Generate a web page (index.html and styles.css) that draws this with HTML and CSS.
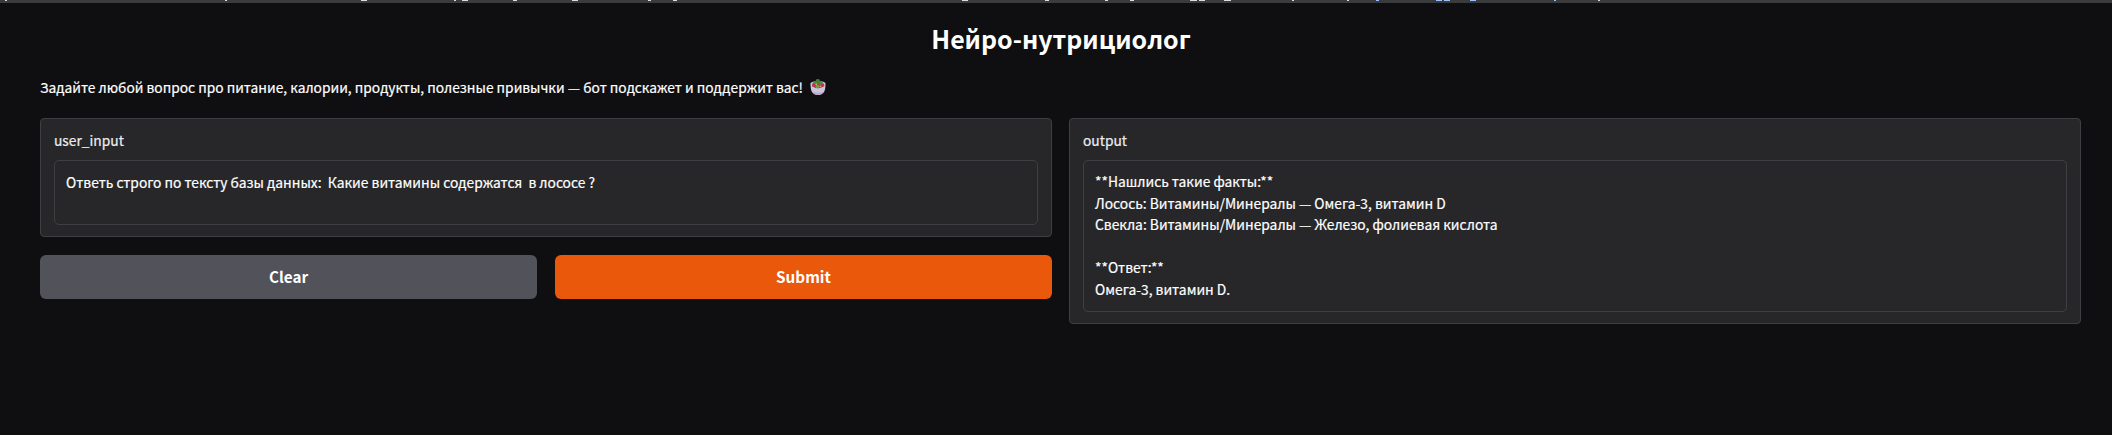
FILE: index.html
```html
<!DOCTYPE html>
<html lang="ru">
<head>
<meta charset="utf-8">
<title>Нейро-нутрициолог</title>
<link rel="stylesheet" href="styles.css">
</head>
<body>
<div class="strip">
<svg class="strip-marks" width="2112" height="1" viewBox="0 0 2112 1" shape-rendering="crispEdges" aria-hidden="true">
<path fill="#dcdcdc" d="M5 0h2v1h-2zM225 0h2v1h-2zM361 0h6v1h-6zM454 0h2v1h-2zM462 0h6v1h-6zM513 0h4v1h-4zM572 0h6v1h-6zM648 0h3v1h-3zM673 0h4v1h-4zM962 0h6v1h-6zM1045 0h4v1h-4zM1105 0h3v1h-3zM1130 0h4v1h-4zM1190 0h7v1h-7zM1199 0h6v1h-6zM1224 0h7v1h-7zM1292 0h2v1h-2zM1347 0h2v1h-2zM1598 0h2v1h-2z"/>
<path fill="#99c3ff" d="M1376 0h3v1h-3zM1436 0h6v1h-6zM1444 0h6v1h-6zM1470 0h6v1h-6zM1554 0h2v1h-2z"/>
</svg>
</div>
<main class="app">
<h1 class="title">Нейро-нутрициолог</h1>
<p class="intro"><span>Задайте любой вопрос про питание, калории, продукты, полезные привычки — бот подскажет и поддержит вас!</span>
<svg class="salad" width="16" height="16" viewBox="0 0 15 16" aria-hidden="true">
<path fill="#cfc3dc" d="M0 4.5C0 1.5 15 1.5 15 4.5C15 11 14 16 7.5 16S0 11 0 4.5z"/>
<path fill="#b9aacb" d="M2 12.5Q7.5 15 13 12.5Q11.5 16 7.5 16T2 12.5z"/>
<ellipse cx="7.5" cy="6" rx="6" ry="3.2" fill="#52703c"/>
<circle cx="7.3" cy="2.4" r="2.3" fill="#477f36"/>
<circle cx="4.4" cy="4.2" r="2" fill="#4c8838"/>
<circle cx="10.5" cy="4.4" r="2.1" fill="#578f40"/>
<circle cx="3.2" cy="6.2" r="1.7" fill="#c72e58"/>
<circle cx="12" cy="6.2" r="1.7" fill="#c72e58"/>
<circle cx="8.7" cy="5" r="1.2" fill="#b83658"/>
<circle cx="7" cy="7.6" r="1.8" fill="#71a345"/>
<circle cx="5.8" cy="5.2" r=".9" fill="#a4bd54"/>
<circle cx="10" cy="7.4" r=".9" fill="#d1a357"/>
</svg></p>
<div class="columns">
<section class="column">
<div class="panel">
<label class="label" for="question">user_input</label>
<div class="field field-input" id="question">Ответь строго по тексту базы данных:  Какие витамины содержатся  в лососе ?</div>
</div>
<div class="actions">
<button class="button">Clear</button>
<button class="button primary">Submit</button>
</div>
</section>
<section class="column">
<div class="panel">
<span class="label">output</span>
<div class="field field-output">**Нашлись такие факты:**
Лосось: Витамины/Минералы — Омега-3, витамин D
Свекла: Витамины/Минералы — Железо, фолиевая кислота

**Ответ:**
Омега-3, витамин D.</div>
</div>
</section>
</div>
</main>
</body>
</html>
```
FILE: styles.css
```css
* { box-sizing: border-box; }

body {
  margin: 0;
  min-height: 435px;
  background: #0f0f11;
  color: #fff;
  font: 400 13.8px/21.6px "Noto Sans CJK SC", "Noto Sans", sans-serif;
  -webkit-text-stroke: 0.2px currentColor;
}

.strip { height: 3px; background: #3b3b3b; }
.strip-marks { display: block; }

.app { padding: 17px 31px 0 40px; }

.title {
  margin: 0;
  padding-left: 1px;
  text-align: center;
  font-size: 24.95px;
  line-height: 36px;
  font-weight: 600;
  -webkit-text-stroke: 0;
}

.intro {
  display: flex;
  align-items: center;
  gap: 7px;
  margin: 21px 0 0;
  font-size: 13.77px;
}
.salad { position: relative; top: -1px; }

.columns {
  display: grid;
  grid-template-columns: 1012px 1012px;
  gap: 17px;
  align-items: start;
  margin-top: 19.4px;
}
.column { display: flex; flex-direction: column; gap: 18px; }

.panel {
  padding: 11px 13px 11px;
  border: 1px solid #3f3f43;
  border-radius: 4px;
  background: #27272a;
}
.label {
  display: block;
  height: 30px;
  color: #ececef;
}
.field {
  padding: 10px 10px 0 11px;
  border: 1px solid #3f3f43;
  border-radius: 5px;
  white-space: pre-wrap;
}
.field-input { height: 65px; padding-top: 11px; }
.field-output { height: 152px; }

.actions {
  display: grid;
  grid-template-columns: 1fr 1fr;
  gap: 18px;
}
.button {
  height: 44px;
  padding: 0 0 1px;
  border: 0;
  border-radius: 6px;
  background: #52525b;
  color: #fff;
  font: 600 15.25px/24px "Noto Sans CJK SC", "Noto Sans", sans-serif;
  -webkit-text-stroke: 0;
}
.primary { background: #ea580c; }
```
